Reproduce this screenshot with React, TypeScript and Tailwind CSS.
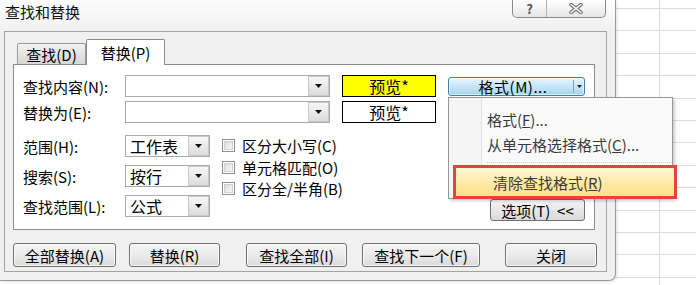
import React from "react";

function Arrow() {
  return (
    <svg width="7" height="4" viewBox="0 0 7 4">
      <path d="M0 0H7L3.5 4Z" fill="#111" />
    </svg>
  );
}

function DropBtn() {
  return (
    <div className="w-[21px] h-full border border-[#c9c9c9] bg-gradient-to-b from-[#f7f7f7] to-[#dcdcdc] flex items-center justify-center">
      <Arrow />
    </div>
  );
}

function Combo({ w, text }: { w: string; text?: string }) {
  return (
    <div className={`${w} h-[22px] flex border border-[#a6abb3] bg-white`}>
      <div className="flex-1 flex items-center pl-[4px] text-[16px] leading-none">{text}</div>
      <DropBtn />
    </div>
  );
}

function Check({ label }: { label: string }) {
  return (
    <div className="h-[21.5px] flex items-center">
      <div className="w-[13px] h-[13px] border border-[#8e8f8f] bg-white p-px">
        <div className="w-full h-full border border-[#d0d0d0] bg-gradient-to-br from-[#dcdcdc] to-[#f7f7f7]" />
      </div>
      <span className="ml-[7px] text-[15px] leading-none">{label}</span>
    </div>
  );
}

function Btn({ w, ml, children }: { w: string; ml: string; children: React.ReactNode }) {
  return (
    <div
      className={`${w} ${ml} h-[24px] flex items-center justify-center border border-[#707070] rounded-[3px] bg-gradient-to-b from-[#f4f4f4] via-[#ebebeb] to-[#d9d9d9] shadow-[inset_0_0_0_1px_rgba(255,255,255,0.8)] text-[15px] leading-none`}
    >
      {children}
    </div>
  );
}

function Dialog() {
  return (
    <div className="relative shrink-0 w-[616px] h-[281px] flex flex-col bg-[#f0f0f0] border-r border-b border-[#9b9b9b] rounded-br-[7px] shadow-[1px_1px_3px_rgba(0,0,0,0.12)]">
      {/* title bar */}
      <div className="h-[31px] flex items-start bg-gradient-to-b from-[#fcfcfc] to-[#f1f1f1]">
        <span className="ml-[5px] mt-[2px] text-[15px] leading-[20px] text-[#111]">查找和替换</span>
        <div className="ml-auto mr-[9px] flex w-[94px] h-[18px] border border-t-0 border-[#8a8a8a] rounded-b-[5px] bg-gradient-to-b from-white to-[#e6e6e6] overflow-hidden">
          <div className="w-[34px] border-r border-[#b0b0b0] flex items-center justify-center text-[13px] leading-none font-bold text-[#555]">
            ?
          </div>
          <div className="flex-1 flex items-center justify-center">
            <svg width="14" height="11" viewBox="0 0 14 11">
              <path d="M2 1.5L12 9.5M12 1.5L2 9.5" stroke="#6f6f6f" strokeWidth="3.6" strokeLinecap="round" />
              <path d="M2 1.5L12 9.5M12 1.5L2 9.5" stroke="#ffffff" strokeWidth="1.6" strokeLinecap="round" />
            </svg>
          </div>
        </div>
      </div>

      {/* group box */}
      <div className="ml-[4px] w-[603px] h-[241px] border border-[#a3a3a3] flex flex-col">
        {/* tabs */}
        <div className="h-[32px] flex items-end pl-[12px]">
          <div className="w-[69px] h-[21px] border border-b-0 border-[#9a9a9a] rounded-t-[2px] bg-gradient-to-b from-[#f2f2f2] to-[#d6d6d6] flex items-center justify-center text-[15px] leading-none">
            查找(D)
          </div>
          <div className="relative z-10 -mb-px w-[79px] h-[26px] border border-b-0 border-[#8c8c8c] rounded-t-[2px] bg-white flex items-center justify-center text-[15px] leading-none">
            替换(P)
          </div>
        </div>

        {/* panel */}
        <div className="ml-[8px] w-[582px] h-[166px] border border-[#8c8c8c] bg-white flex flex-col pl-[9px] pt-[10px]">
          <div className="flex flex-col gap-[4px]">
            <div className="h-[22px] flex items-center">
              <span className="w-[102px] text-[15px] leading-none">查找内容(N):</span>
              <Combo w="w-[205px]" />
              <div className="ml-[12px] w-[94px] h-[22px] border border-black bg-[#ffff00] flex items-center justify-center text-[16px] leading-none">
                预览*
              </div>
              <div className="ml-[12px] w-[137px] h-[19px] flex items-center border border-[#3c7fb1] rounded-[3px] bg-gradient-to-b from-[#eaf6fd] via-[#c6e6f8] to-[#a3d4f1] shadow-[inset_0_0_0_1px_rgba(255,255,255,0.6)]">
                <span className="flex-1 text-center text-[15px] leading-none tracking-[0.5px] pl-[4px]">格式(M)...</span>
                <div className="w-[11px] h-[13px] border-l border-[#7aa7c8] flex items-center justify-center">
                  <svg width="5" height="3" viewBox="0 0 5 3">
                    <path d="M0 0H5L2.5 3Z" fill="#222" />
                  </svg>
                </div>
              </div>
            </div>
            <div className="h-[22px] flex items-center">
              <span className="w-[102px] text-[15px] leading-none">替换为(E):</span>
              <Combo w="w-[205px]" />
              <div className="ml-[12px] w-[94px] h-[22px] border border-black bg-white flex items-center justify-center text-[16px] leading-none">
                预览*
              </div>
            </div>
          </div>

          <div className="flex-1 mt-[12px] pb-[8px] flex">
            <div className="flex flex-col gap-[8px] self-start">
              <div className="h-[22px] flex items-center">
                <span className="w-[102px] text-[15px] leading-none">范围(H):</span>
                <Combo w="w-[85px]" text="工作表" />
              </div>
              <div className="h-[22px] flex items-center">
                <span className="w-[102px] text-[15px] leading-none">搜索(S):</span>
                <Combo w="w-[85px]" text="按行" />
              </div>
              <div className="h-[22px] flex items-center">
                <span className="w-[102px] text-[15px] leading-none">查找范围(L):</span>
                <Combo w="w-[85px]" text="公式" />
              </div>
            </div>
            <div className="ml-[12px] flex flex-col self-start">
              <Check label="区分大小写(C)" />
              <Check label="单元格匹配(O)" />
              <Check label="区分全/半角(B)" />
            </div>
            <div className="ml-auto mr-[9px] self-end w-[95px] h-[22px] flex items-center justify-center border border-[#707070] rounded-[3px] bg-gradient-to-b from-[#f4f4f4] to-[#dadada] text-[15px] leading-none">
              选项(T)&nbsp;&nbsp;&lt;&lt;
            </div>
          </div>
        </div>

        {/* bottom buttons */}
        <div className="mt-[13px] ml-[8px] flex">
          <Btn w="w-[103px]" ml="ml-0">全部替换(A)</Btn>
          <Btn w="w-[91px]" ml="ml-[13px]">替换(R)</Btn>
          <Btn w="w-[101px]" ml="ml-[26px]">查找全部(I)</Btn>
          <Btn w="w-[118px]" ml="ml-[15px]">查找下一个(F)</Btn>
          <Btn w="w-[92px]" ml="ml-[25px]">关闭</Btn>
        </div>
      </div>
    </div>
  );
}

function Menu() {
  return (
    <>
      <div className="absolute left-[448px] top-[97px] w-[225px] h-[102px] border border-[#979797] bg-[#fafafa] shadow-[2px_2px_3px_rgba(0,0,0,0.2)] flex">
        <div className="w-[33px] h-full border-r border-[#e2e3e3] bg-[#f5f5f5]" />
        <div className="flex-1 flex flex-col pt-[9px] pl-[5px] text-[15px] leading-none text-[#3a3a3a]">
          <div className="h-[25px] flex items-center">
            格式(<span className="underline">F</span>)...
          </div>
          <div className="h-[25px] flex items-center">
            从单元格选择格式(<span className="underline">C</span>)...
          </div>
          <div className="h-[8px] flex items-end">
            <div className="w-full border-t border-dotted border-[#c5c5c5] mb-[2px]" />
          </div>
        </div>
      </div>
      <div className="absolute left-[453px] top-[165px] w-[224px] h-[34px] border-[3px] border-[#e8433b] bg-white">
        <div className="w-full h-full bg-gradient-to-b from-[#fff6d6] via-[#feeaa8] to-[#fde08a] flex items-center pl-[37px] text-[15px] leading-none text-[#3a3a3a]">
          清除查找格式(<span className="underline">R</span>)
        </div>
      </div>
    </>
  );
}

export default function App() {
  return (
    <div className="relative flex w-[696px] h-[285px] overflow-hidden bg-white font-['Noto_Sans_CJK_SC','Noto_Sans',sans-serif] text-black">
      <Dialog />
      <div className="w-[80px] h-[285px] bg-[image:repeating-linear-gradient(to_bottom,transparent_0px,transparent_8px,#dcdcdc_8px,#dcdcdc_9px,transparent_9px,transparent_22.4px)]">
        <div className="w-[44px] h-full border-r border-[#dcdcdc]" />
      </div>
      <Menu />
    </div>
  );
}
